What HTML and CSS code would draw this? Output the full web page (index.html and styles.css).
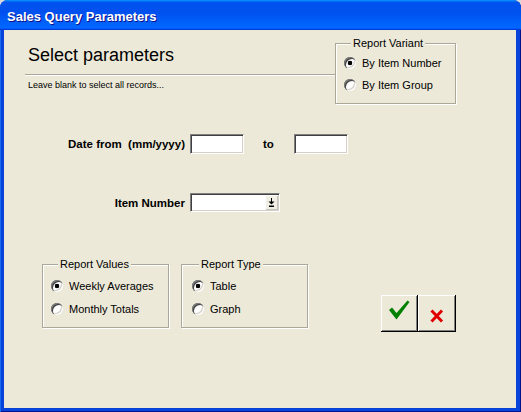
FILE: index.html
```html
<!DOCTYPE html>
<html lang="en">

<head>
    <meta charset="UTF-8">
    <meta name="viewport" content="width=device-width, initial-scale=1.0">
    <title>Sales Query Parameters</title>
    <link rel="stylesheet" href="styles.css">
</head>

<body>
    <div class="window">
        <div class="titlebar">Sales Query Parameters</div>
        <div class="dialog">
            <div class="header-row">
                <div class="heading">
                    <h1>Select parameters</h1>
                    <div class="separator"></div>
                    <p class="hint">Leave blank to select all records...</p>
                </div>
                <fieldset class="group group-variant">
                    <legend>Report Variant</legend>
                    <label class="option"><input type="radio" name="variant" checked>By Item Number</label>
                    <label class="option"><input type="radio" name="variant">By Item Group</label>
                </fieldset>
            </div>

            <div class="field-row date-row">
                <span class="field-label">Date from&nbsp; (mm/yyyy)</span>
                <input type="text" class="textbox">
                <span class="to-label">to</span>
                <input type="text" class="textbox">
            </div>

            <div class="field-row item-row">
                <span class="field-label">Item Number</span>
                <div class="combo">
                    <input type="text" class="combo-field">
                    <span class="combo-btn">
                        <svg width="7" height="9" viewBox="0 0 7 9">
                            <rect x="3" y="0" width="1" height="4" fill="#000" />
                            <polygon points="0.5,3.5 6.5,3.5 3.5,6.5" fill="#000" />
                            <rect x="1" y="7.5" width="5" height="1.5" fill="#000" />
                        </svg>
                    </span>
                </div>
            </div>

            <div class="bottom-row">
                <fieldset class="group group-values">
                    <legend>Report Values</legend>
                    <label class="option"><input type="radio" name="values" checked>Weekly Averages</label>
                    <label class="option"><input type="radio" name="values">Monthly Totals</label>
                </fieldset>
                <fieldset class="group group-type">
                    <legend>Report Type</legend>
                    <label class="option"><input type="radio" name="type" checked>Table</label>
                    <label class="option"><input type="radio" name="type">Graph</label>
                </fieldset>
                <div class="actions">
                    <button type="button" class="tool-btn ok-btn" title="OK">
                        <svg width="37" height="37" viewBox="0 0 37 37">
                            <path d="M8 15 L11 12.5 L15.5 18 L26.5 5.5 L28.5 7 L15.5 24.5 Z" fill="#008000" />
                        </svg>
                    </button>
                    <button type="button" class="tool-btn cancel-btn" title="Cancel">
                        <svg width="38" height="37" viewBox="0 0 38 37">
                            <path d="M13.5 15.5 L24 26.5 M24 15.5 L13.5 26.5" stroke="#e00000" stroke-width="3" fill="none" />
                        </svg>
                    </button>
                </div>
            </div>
        </div>
    </div>
</body>

</html>
```

FILE: styles.css
```css
html,
body {
    margin: 0;
    padding: 0;
    background-color: #d8d8d8;
}

body {
    font-family: "Liberation Sans", Arial, sans-serif;
    font-size: 11px;
    color: #000;
}

.window {
    width: 521px;
    height: 412px;
    box-sizing: border-box;
    display: flex;
    flex-direction: column;
    background-color: #0843d9;
    border-radius: 8px 8px 0 0;
    box-shadow: inset 1px 0 #166aee, inset -1px -1px #00138c;
    overflow: hidden;
}

.titlebar {
    flex: none;
    height: 30px;
    box-sizing: border-box;
    padding: 9px 7px 0;
    background: linear-gradient(180deg, #0997ff, #0053ee 8%, #0050ee 40%, #0066ff 88%, #0066ff 93%, #005bff 95%, #003dd7 96%, #003dd7);
    color: #fff;
    font-size: 13px;
    font-weight: bold;
    line-height: 15px;
    text-shadow: 1px 1px #0f1089;
}

.dialog {
    flex: 1;
    margin: 0 5px 4px 4px;
    padding: 7px 60px 0 21px;
    background-color: #ece9d8;
}

.header-row {
    display: flex;
    align-items: flex-start;
}

.heading {
    flex: 1;
}

h1 {
    margin: 7px 0 0;
    padding-left: 3px;
    font-size: 18px;
    font-weight: normal;
    line-height: 22px;
}

.separator {
    margin-top: 8px;
    border-top: 1px solid #aca899;
    border-bottom: 1px solid #fff;
}

.hint {
    margin: 4px 0 0;
    padding-left: 3px;
    font-size: 9px;
    line-height: 11px;
}

/* group boxes */
.group {
    margin: 0;
    padding: 0;
    box-sizing: border-box;
    border: 1px solid #aca899;
    box-shadow: inset 1px 1px #fff, 1px 1px #fff;
    min-width: 0;
}

.group legend {
    margin-left: 7px;
    padding: 0 2px;
    line-height: 13px;
    background-color: #ece9d8;
}

.group-variant {
    width: 121px;
    padding: 2px 0 7px 8px;
}

.group-values,
.group-type {
    width: 127px;
    padding: 4px 0 7px 8px;
}

.group-values {
    margin-left: 17px;
}

.group-type {
    margin-left: 12px;
    padding-left: 10px;
}

.group-values .option + .option,
.group-type .option + .option {
    margin-top: 1px;
}

.option {
    display: flex;
    align-items: center;
    gap: 6px;
    height: 22px;
}

.option input[type="radio"] {
    appearance: none;
    -webkit-appearance: none;
    flex: none;
    width: 12px;
    height: 12px;
    margin: 0;
    border-radius: 50%;
    background-color: #fff;
    box-shadow: inset 1px 1px 0 #808080, inset 2px 2px 0 #404040, inset -1px -1px 0 #fff, inset -2px -2px 0 #d4d0c8;
}

.option input[type="radio"]:checked {
    background: radial-gradient(circle, #000 0 2px, #fff 2.6px);
}

/* fields */
.field-row {
    display: flex;
    align-items: center;
}

.date-row {
    margin-top: 30px;
}

.item-row {
    margin-top: 39px;
}

.field-label {
    width: 160px;
    margin-right: 5px;
    text-align: right;
    font-size: 11.5px;
    font-weight: bold;
    white-space: nowrap;
}

.to-label {
    margin: 0 20px 0 19px;
    font-size: 11.5px;
    font-weight: bold;
}

.textbox,
.combo {
    box-sizing: border-box;
    border: 1px solid;
    border-color: #808080 #fff #fff #808080;
    box-shadow: inset 1px 1px #404040, inset -1px -1px #d4d0c8;
    background-color: #fff;
}

.textbox {
    width: 54px;
    height: 20px;
    margin: 0;
    padding: 0;
    appearance: none;
    -webkit-appearance: none;
    outline: none;
}

.combo {
    display: flex;
    width: 90px;
    height: 19px;
    padding: 1px;
}

.combo-field {
    flex: 1;
    min-width: 0;
    margin: 0;
    padding: 0;
    border: none;
    outline: none;
    background: #fff;
}

.combo-btn {
    display: flex;
    align-items: center;
    justify-content: center;
    width: 13px;
    background-color: #f1efe6;
    box-shadow: inset 1px 1px #fff, inset -1px -1px #c8c5b8;
}

/* bottom row */
.bottom-row {
    display: flex;
    align-items: flex-start;
    margin-top: 46px;
}

.actions {
    display: flex;
    margin-left: auto;
    margin-top: 37px;
}

.tool-btn {
    display: block;
    height: 37px;
    padding: 0;
    margin: 0;
    border: none;
    background-color: #ece9d8;
    box-shadow: inset -1px -1px #000, inset 1px 1px #fff, inset -2px -2px #808080;
    cursor: pointer;
}

.tool-btn svg {
    display: block;
}

.ok-btn {
    width: 37px;
}

.cancel-btn {
    width: 38px;
}
```
